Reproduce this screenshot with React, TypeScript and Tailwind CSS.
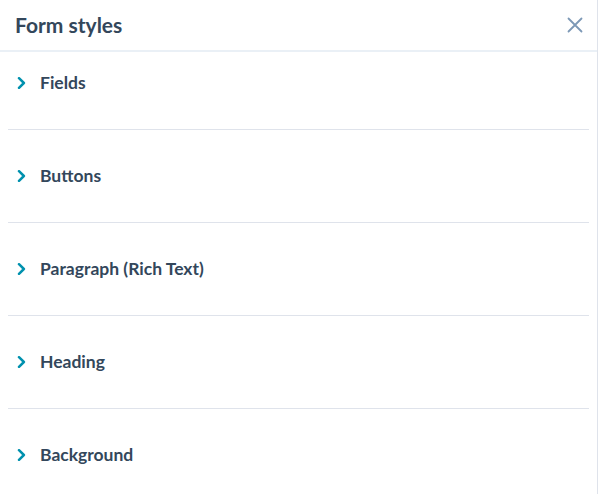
import React from 'react'

const sections = ['Fields', 'Buttons', 'Paragraph (Rich Text)', 'Heading', 'Background']

const Chevron = () => (
  <svg width="9" height="12" viewBox="0 0 9 12" fill="none" className="shrink-0">
    <path d="M2 1.2 L6.9 6 L2 10.8" stroke="#0091ae" strokeWidth="2.5" strokeLinecap="round" strokeLinejoin="round" />
  </svg>
)

const CloseIcon = () => (
  <svg width="16" height="16" viewBox="0 0 16 16" fill="none">
    <path d="M1.5 1.5 L14.5 14.5 M14.5 1.5 L1.5 14.5" stroke="#7c98b6" strokeWidth="1.8" strokeLinecap="round" />
  </svg>
)

export default function App() {
  const [open, setOpen] = React.useState<string | null>(null)

  return (
    <div className="w-[600px] h-[494px] bg-white overflow-hidden" style={{ fontFamily: 'Lato, "Noto Sans", sans-serif' }}>
      <div className="w-[598px] h-full border-r border-[#dfe3eb] flex flex-col">
        {/* header */}
        <div className="h-[52px] shrink-0 flex items-center justify-between pl-[15px] pr-[14px] border-b-2 border-[#eaf0f6]">
          <h1 className="text-[21px] font-bold text-[#33475b]">Form styles</h1>
          <button><CloseIcon /></button>
        </div>

        <div className="px-2">
          {sections.map((s, i) => (
            <div key={s} className={i > 0 ? 'border-t border-[#dfe3eb] pt-[15px]' : ''}>
              <button
                onClick={() => setOpen(open === s ? null : s)}
                className="w-full h-[32px] mt-[15px] mb-[30px] flex items-center gap-[14px] pl-[9px] text-left"
              >
                <Chevron />
                <span className="text-[17.5px] font-bold text-[#33475b]">{s}</span>
              </button>
            </div>
          ))}
        </div>
      </div>
    </div>
  )
}
